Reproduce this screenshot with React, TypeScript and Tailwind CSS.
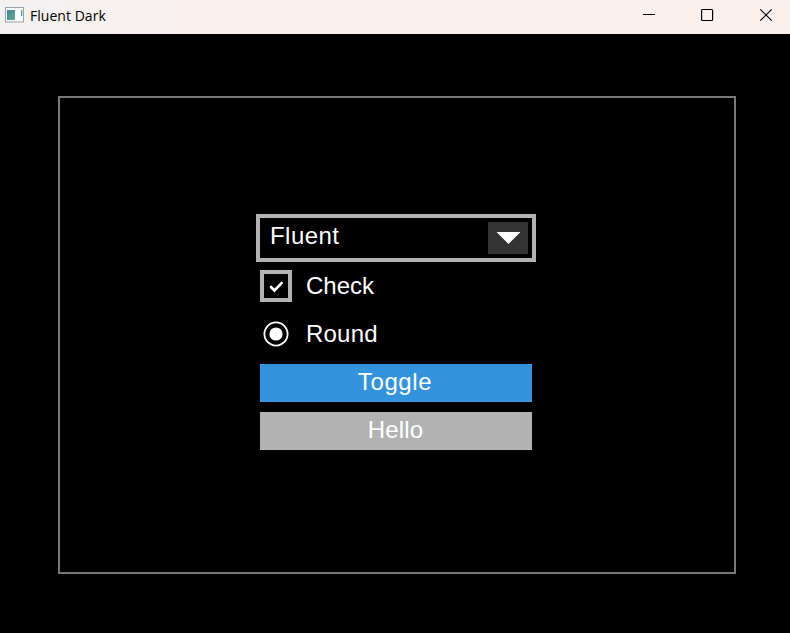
import React from "react";

function TitleBar() {
  return (
    <header className="flex h-[34px] shrink-0 items-start bg-gradient-to-r from-[#f4f1f3] to-[#faf1ee] to-25% text-black">
      <svg className="ml-[5px] mt-[7px] shrink-0" width="19" height="16" viewBox="0 0 19 16">
        <defs>
          <linearGradient id="pane" x1="0" y1="0" x2="1" y2="1">
            <stop offset="0" stopColor="#4a7f9c" />
            <stop offset="1" stopColor="#5fae8c" />
          </linearGradient>
        </defs>
        <rect x="0.5" y="0.5" width="18" height="14.5" fill="#f6f9fa" stroke="#9aa3ad" />
        <rect x="2" y="3" width="8" height="10" fill="url(#pane)" />
        <rect x="11" y="3" width="4" height="10" fill="#fff" />
        <rect x="16" y="3" width="1.3" height="6" fill="#5d9a94" />
      </svg>
      <h1 className="ml-[6px] mt-[6px] font-['Open_Sans','Noto_Sans',sans-serif] text-[14px] leading-5 tracking-[0.03px]">
        Fluent Dark
      </h1>
      <div className="ml-auto mr-[17px] mt-[8px] flex">
        <svg className="mr-[44px]" width="14" height="14" viewBox="0 0 14 14" fill="none" stroke="#000" strokeWidth="1">
          <path d="M0 6.5H12" />
        </svg>
        <svg className="mr-[44px]" width="14" height="14" viewBox="0 0 14 14" fill="none" stroke="#000" strokeWidth="1.2">
          <rect x="0.6" y="1.5" width="11" height="11" rx="1" />
        </svg>
        <svg width="14" height="14" viewBox="0 0 14 14" fill="none" stroke="#000" strokeWidth="1.2">
          <path d="M1.3 1.3L12.7 12.7M12.7 1.3L1.3 12.7" />
        </svg>
      </div>
    </header>
  );
}

export default function App() {
  return (
    <div className="flex h-[633px] w-[790px] flex-col overflow-hidden bg-black font-['Liberation_Sans',Arial,sans-serif] text-[24px] text-white">
      <TitleBar />
      <main className="ml-[58px] mt-[62px] flex h-[478px] w-[678px] flex-col border-2 border-[#787878] pl-[196px] pt-[116px]">
        <div className="flex h-[48px] w-[280px] items-center justify-between border-4 border-[#b2b2b2] pl-[10px] pr-1">
          <span className="-mt-1 leading-[28px] tracking-[0.45px]">Fluent</span>
          <div className="flex h-8 w-10 items-center justify-center bg-[#333333]">
            <svg width="24" height="12" viewBox="0 0 24 12">
              <path d="M0.5 0H24.5L12.5 12Z" fill="#fff" />
            </svg>
          </div>
        </div>
        <label className="ml-1 mt-2 flex h-8 items-center gap-[14px]">
          <span className="flex size-8 items-center justify-center border-4 border-[#b2b2b2]">
            <svg width="24" height="24" viewBox="0 0 24 24">
              <path d="M5.8 12.6L7.2 11.2L10.5 14.5L17.6 7.2L18.9 8.5V9.4L10.5 18.6L5.8 13.8Z" fill="#fff" />
            </svg>
          </span>
          <span className="leading-[28px]">Check</span>
        </label>
        <label className="ml-1 mt-4 flex h-8 items-center gap-[14px]">
          <svg width="32" height="32" viewBox="0 0 32 32">
            <circle cx="16" cy="16" r="11.6" fill="none" stroke="#fff" strokeWidth="1.8" />
            <circle cx="16" cy="16" r="6.6" fill="#fff" />
          </svg>
          <span className="leading-[28px] tracking-[0.2px]">Round</span>
        </label>
        <button className="ml-1 mt-[14px] h-[38px] w-[272px] bg-[#3393dd] pb-[2px] pr-[2px] leading-[36px] tracking-[0.6px]">Toggle</button>
        <button className="ml-1 mt-[10px] h-[38px] w-[272px] bg-[#b2b2b2] pb-[2px] pr-[1px] leading-[36px] tracking-[0.2px]">Hello</button>
      </main>
    </div>
  );
}
